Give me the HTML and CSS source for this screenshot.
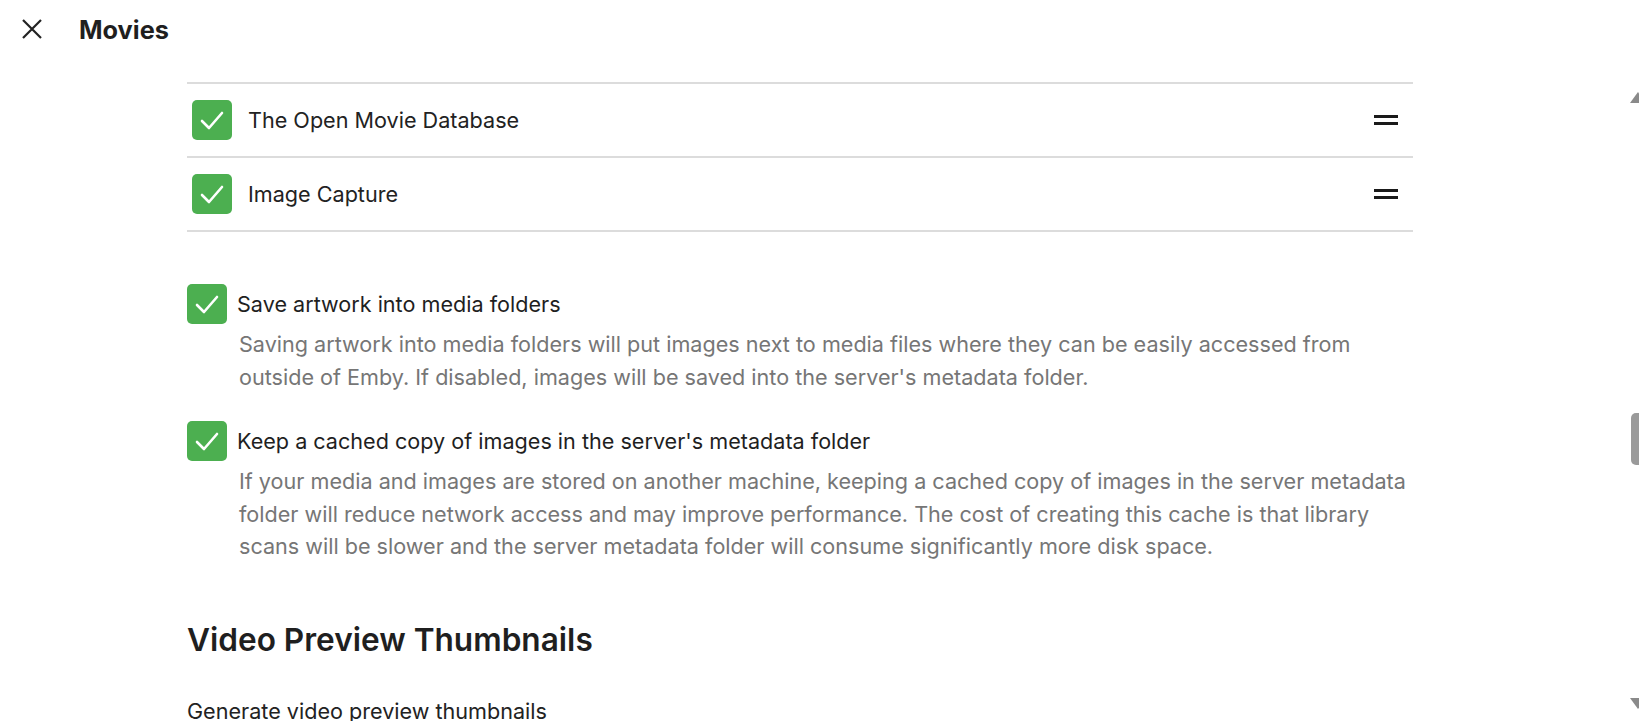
FILE: index.html
```html
<!DOCTYPE html>
<html lang="en">
<head>
<meta charset="utf-8">
<title>Movies</title>
<link rel="stylesheet" href="styles.css">
</head>
<body>
<div class="page">
  <header class="topbar">
    <button class="close-btn" aria-label="Close">
      <svg width="20" height="20" viewBox="0 0 20 20"><path d="M1 1 L19 19 M19 1 L1 19" stroke="#222" stroke-width="2.2" fill="none"/></svg>
    </button>
    <h1 class="title">Movies</h1>
  </header>

  <main class="content">
    <ul class="fetcher-list">
      <li class="fetcher-row">
        <span class="check"><svg viewBox="0 0 40 40"><path d="M10 21 L17 28 L30 13" stroke="#fff" stroke-width="2.6" fill="none" stroke-linecap="round" stroke-linejoin="round"/></svg></span>
        <span class="fetcher-name">The Open Movie Database</span>
        <span class="handle"><i></i><i></i></span>
      </li>
      <li class="fetcher-row">
        <span class="check"><svg viewBox="0 0 40 40"><path d="M10 21 L17 28 L30 13" stroke="#fff" stroke-width="2.6" fill="none" stroke-linecap="round" stroke-linejoin="round"/></svg></span>
        <span class="fetcher-name">Image Capture</span>
        <span class="handle"><i></i><i></i></span>
      </li>
    </ul>

    <div class="option first">
      <span class="check"><svg viewBox="0 0 40 40"><path d="M10 21 L17 28 L30 13" stroke="#fff" stroke-width="2.6" fill="none" stroke-linecap="round" stroke-linejoin="round"/></svg></span>
      <div class="option-body">
        <div class="option-label">Save artwork into media folders</div>
        <div class="option-desc">Saving artwork into media folders will put images next to media files where they can be easily accessed from outside of Emby. If disabled, images will be saved into the server's metadata folder.</div>
      </div>
    </div>

    <div class="option">
      <span class="check"><svg viewBox="0 0 40 40"><path d="M10 21 L17 28 L30 13" stroke="#fff" stroke-width="2.6" fill="none" stroke-linecap="round" stroke-linejoin="round"/></svg></span>
      <div class="option-body">
        <div class="option-label">Keep a cached copy of images in the server's metadata folder</div>
        <div class="option-desc">If your media and images are stored on another machine, keeping a cached copy of images in the server metadata folder will reduce network access and may improve performance. The cost of creating this cache is that library scans will be slower and the server metadata folder will consume significantly more disk space.</div>
      </div>
    </div>

    <h2 class="section-title">Video Preview Thumbnails</h2>
    <div class="field-label">Generate video preview thumbnails</div>
  </main>

  <div class="scrollbar">
    <span class="arrow up"></span>
    <span class="thumb"></span>
    <span class="arrow down"></span>
  </div>
</div>
</body>
</html>
```

FILE: styles.css
```css
* { box-sizing: border-box; }
html, body {
  margin: 0;
  padding: 0;
  background: #fff;
  overflow: hidden;
}
body {
  font-family: Inter, "Noto Sans", sans-serif;
  color: #1f1f1f;
}
.page {
  position: relative;
  width: 1639px;
  height: 721px;
  overflow: hidden;
}
.topbar {
  display: flex;
  align-items: center;
  height: 58px;
  padding-left: 22px;
}
.close-btn {
  border: 0;
  background: none;
  padding: 0;
  width: 20px;
  height: 20px;
  display: flex;
}
.title {
  margin: 0 0 0 37px;
  font-size: 25.3px;
  font-weight: 700;
  color: #1f1f1f;
}
.content {
  width: 1226px;
  margin-left: 187px;
  padding-top: 24px;
}
.fetcher-list {
  list-style: none;
  margin: 0;
  padding: 0;
  border-top: 2px solid #dcdcdc;
}
.fetcher-row {
  display: flex;
  align-items: center;
  height: 74px;
  border-bottom: 2px solid #dcdcdc;
  padding-left: 5px;
}
.check {
  flex: none;
  width: 40px;
  height: 40px;
  border-radius: 5px;
  background: #4caf50;
  display: flex;
}
.check svg { width: 40px; height: 40px; }
.fetcher-name {
  flex: 1;
  margin-left: 16px;
  font-size: 21.6px;
  color: #222;
}
.handle {
  display: flex;
  flex-direction: column;
  gap: 4px;
  width: 24px;
  margin-right: 15px;
}
.handle i {
  display: block;
  height: 3px;
  background: #1a1a1a;
}
.option {
  display: flex;
  align-items: flex-start;
  margin-top: 27.6px;
}
.option.first { margin-top: 52px; }
.option-body {
  margin-left: 10px;
  flex: 1;
}
.option-label {
  font-size: 21.6px;
  line-height: 40px;
  color: #1f1f1f;
}
.option-desc {
  font-size: 21.6px;
  line-height: 32.7px;
  color: #767676;
  padding-left: 2px;
  margin-top: 4px;
}
.section-title {
  margin: 57px 0 0;
  font-size: 31.6px;
  font-weight: 600;
  line-height: 40px;
  color: #1f1f1f;
}
.field-label {
  margin-top: 39px;
  font-size: 21.6px;
  line-height: 24px;
  color: #222;
}
.scrollbar {
  position: absolute;
  right: 0;
  top: 0;
  width: 9px;
  height: 721px;
}
.arrow {
  position: absolute;
  right: 0;
  width: 0;
  height: 0;
  border-left: 8px solid transparent;
  border-right: 8px solid transparent;
}
.arrow.up {
  top: 92px;
  right: -7px;
  border-bottom: 11px solid #8a8a8a;
}
.arrow.down {
  top: 698px;
  right: -7px;
  border-top: 11px solid #8a8a8a;
}
.thumb {
  position: absolute;
  right: 0;
  top: 413px;
  width: 8px;
  height: 52px;
  border-radius: 5px 0 0 5px;
  background: #9a9a9a;
}
```
